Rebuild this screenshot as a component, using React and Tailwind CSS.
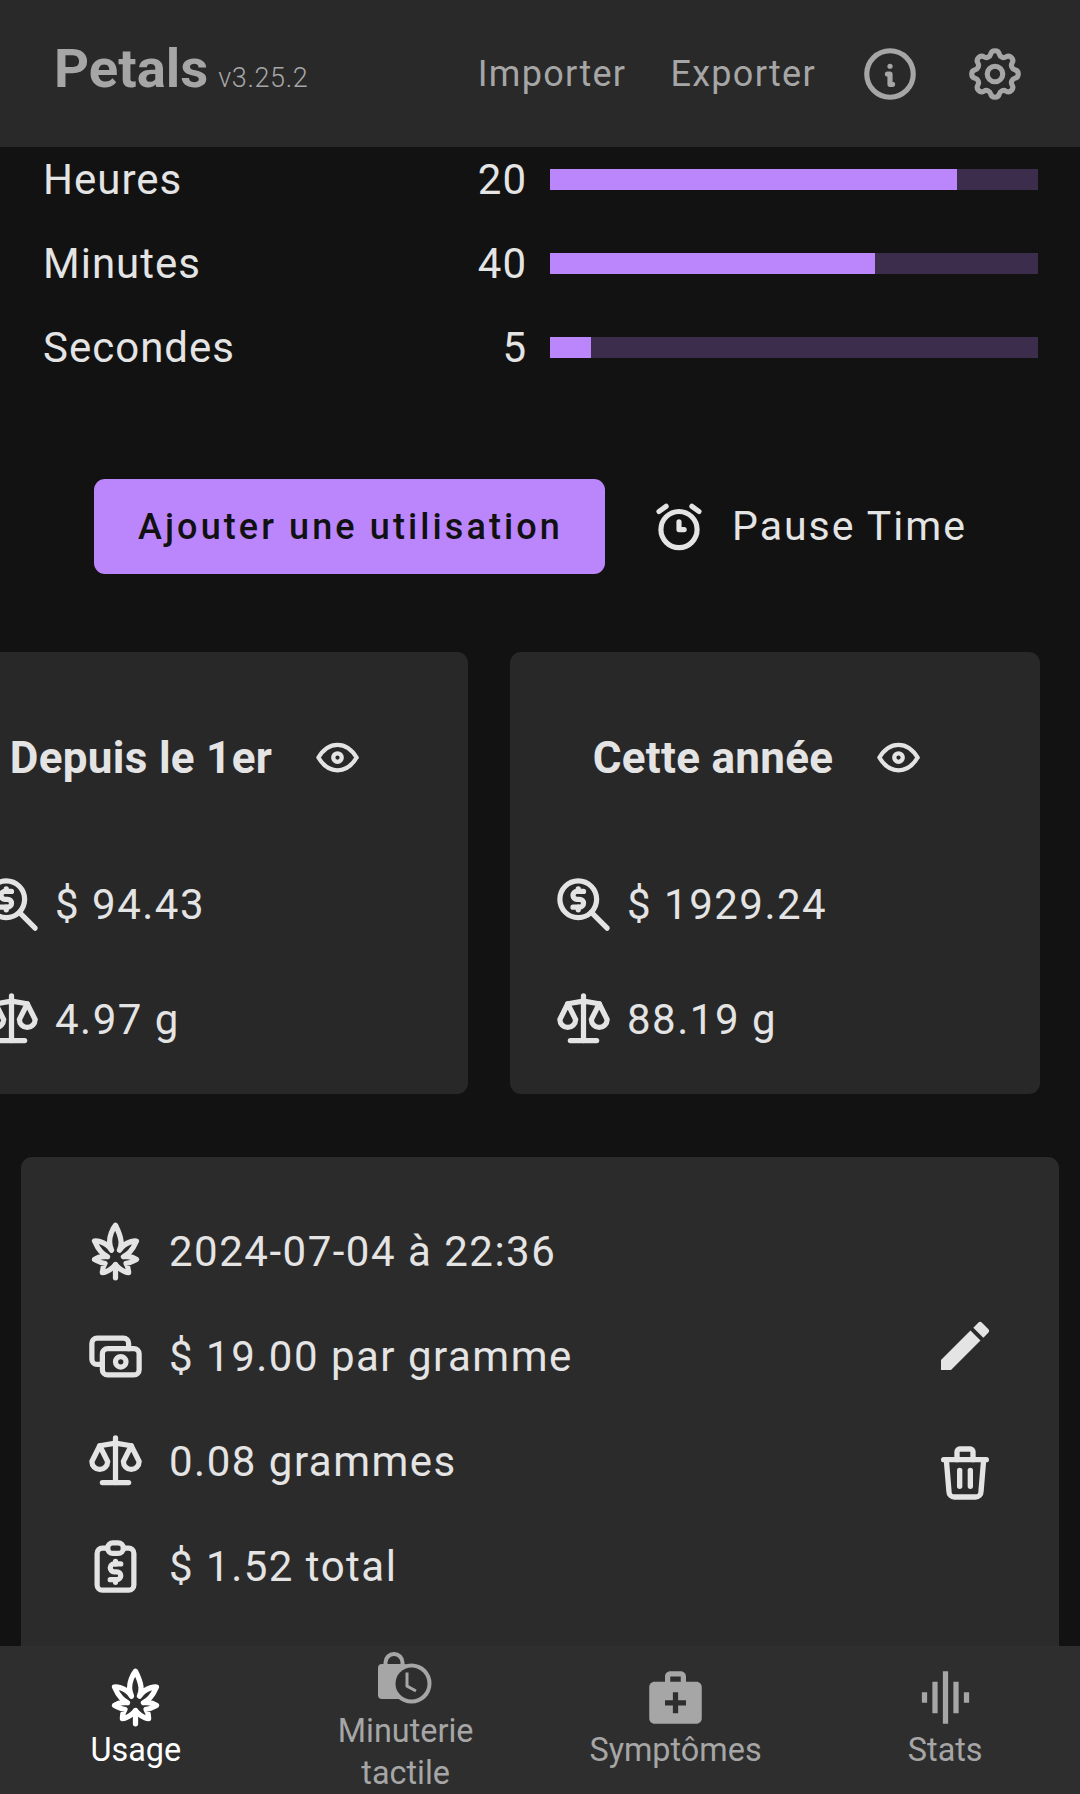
import { TbInfoCircle, TbSettings, TbAlarm, TbEye, TbZoomMoney, TbScale, TbCannabis, TbCash, TbTrash, TbReportMoney } from 'react-icons/tb'
import { MdEdit, MdMedicalServices, MdGraphicEq } from 'react-icons/md'

const FONT = { fontFamily: 'Roboto, sans-serif' }

const TIMERS = [
  { label: 'Heures', value: 20, pct: 83.33 },
  { label: 'Minutes', value: 40, pct: 66.67 },
  { label: 'Secondes', value: 5, pct: 8.33 },
]

const LOG = [
  { icon: TbCannabis, text: '2024-07-04 à 22:36' },
  { icon: TbCash, text: '$ 19.00 par gramme' },
  { icon: TbScale, text: '0.08 grammes' },
  { icon: TbReportMoney, text: '$ 1.52 total' },
]

function LockClock({ className }) {
  return (
    <svg viewBox="0 0 63 63" className={className} fill="none">
      <g transform="translate(4 5)">
        <path d="M7.5 14V10.5a8.5 8.5 0 0 1 17 0V15" stroke="currentColor" strokeWidth="4" />
        <rect x="0" y="12" width="30" height="35" rx="4" fill="currentColor" />
        <circle cx="33.5" cy="31.5" r="20" fill="currentColor" />
        <circle cx="33.5" cy="31.5" r="16" fill="#2e2e2e" />
        <path d="M29 20.5V34L38 39" stroke="currentColor" strokeWidth="3" />
      </g>
    </svg>
  )
}

function StatCard({ title, money, weight, className }) {
  return (
    <div className={`flex h-[442px] shrink-0 flex-col rounded-[11px] bg-[#282828] text-[#e4e4e4] ${className}`}>
      <div className="mt-[80px] flex items-center justify-center gap-[40px] pr-[33px]">
        <span className="text-[44px] font-bold leading-[46px] tracking-[0.3px]">{title}</span>
        <TbEye className="h-[51px] w-[51px]" />
      </div>
      <div className="mt-[90px] flex items-center gap-[12px] pl-[42px]">
        <TbZoomMoney className="h-[63px] w-[63px]" />
        <span className="text-[42px] leading-[46px] tracking-[1.5px]">{money}</span>
      </div>
      <div className="mt-[52px] flex items-center gap-[12px] pl-[42px]">
        <TbScale className="h-[63px] w-[63px]" />
        <span className="text-[42px] leading-[46px] tracking-[1.5px]">{weight}</span>
      </div>
    </div>
  )
}

function NavItem({ icon: Icon, label, active }) {
  return (
    <div className={`flex w-[270px] flex-col items-center ${active ? 'text-white' : 'text-[#a6a6a6]'}`}>
      <Icon className="h-[63px] w-[63px] shrink-0" />
      <span className="max-w-[190px] text-center text-[32.4px] leading-[42px]">{label}</span>
    </div>
  )
}

export default function App() {
  return (
    <div style={FONT} className="flex h-[1794px] w-[1080px] flex-col overflow-hidden bg-[#121212]">
      {/* app bar */}
      <header className="flex h-[147px] shrink-0 items-center bg-[#292929] pl-[54px] pr-[54px] text-[#a6a6a6]">
        <div className="-mt-[11px] flex items-baseline">
          <span className="text-[54.5px] font-bold leading-none">Petals</span>
          <span className="ml-[10px] text-[27px] font-light leading-none tracking-[0.6px]">v3.25.2</span>
        </div>
        <span className="ml-auto text-[36px] tracking-[1.3px]">Importer</span>
        <span className="ml-[44px] text-[36px] tracking-[1.3px]">Exporter</span>
        <TbInfoCircle className="ml-[43px] h-[62px] w-[62px]" />
        <TbSettings className="ml-[43px] h-[62px] w-[62px]" />
      </header>

      <main className="relative min-h-0 flex-1 overflow-hidden">
        {/* timers */}
        <div className="mt-[11px] flex flex-col gap-[42px] pl-[43px] pr-[42px] text-[#e4e4e4]">
          {TIMERS.map((t) => (
            <div key={t.label} className="flex h-[42px] items-center">
              <span className="text-[42px] tracking-[1px]">{t.label}</span>
              <span className="ml-auto w-[80px] text-right text-[42px] tracking-[1px]">{t.value}</span>
              <div className="ml-[23px] h-[21px] w-[488px] bg-[#3d2d4d]">
                <div className="h-full bg-[#bb86fc]" style={{ width: `${t.pct}%` }} />
              </div>
            </div>
          ))}
        </div>

        {/* actions */}
        <div className="mt-[111px] flex items-center pl-[94px]">
          <button className="h-[95px] w-[511px] rounded-[11px] bg-[#bb86fc] pl-[2px] text-[36px] font-medium tracking-[3.1px] text-[#111]">
            Ajouter une utilisation
          </button>
          <TbAlarm className="ml-[43px] h-[62px] w-[62px] text-[#e4e4e4]" />
          <span className="ml-[22px] text-[41px] tracking-[2px] text-[#e4e4e4]">Pause Time</span>
        </div>

        {/* period cards */}
        <div className="mt-[78px] flex gap-[42px]">
          <StatCard className="-ml-[62px] w-[530px]" title="Depuis le 1er" money="$ 94.43" weight="4.97 g" />
          <StatCard className="w-[530px]" title="Cette année" money="$ 1929.24" weight="88.19 g" />
        </div>

        {/* last usage */}
        <div className="mx-[21px] mt-[63px] flex h-[600px] rounded-[11px] bg-[#2b2b2b] pl-[63px] pt-[63px] text-[#e4e4e4]">
          <div className="flex flex-col gap-[42px]">
            {LOG.map((row) => (
              <div key={row.text} className="flex h-[63px] items-center gap-[22px]">
                <row.icon className="h-[63px] w-[63px]" />
                <span className="text-[42px] tracking-[1.5px]">{row.text}</span>
              </div>
            ))}
          </div>
          <div className="ml-auto mr-[62px] mt-[94px] flex flex-col items-center gap-[63px]">
            <MdEdit className="h-[64px] w-[64px]" />
            <TbTrash className="h-[64px] w-[64px]" />
          </div>
        </div>
      </main>

      {/* bottom navigation */}
      <nav className="flex h-[148px] shrink-0 items-start bg-[#2e2e2e] pl-[1px] pt-[20px]">
        <NavItem icon={TbCannabis} label="Usage" active />
        <div className="-mt-[19px]">
          <NavItem icon={LockClock} label="Minuterie tactile" />
        </div>
        <NavItem icon={MdMedicalServices} label="Symptômes" />
        <NavItem icon={MdGraphicEq} label="Stats" />
      </nav>
    </div>
  )
}
